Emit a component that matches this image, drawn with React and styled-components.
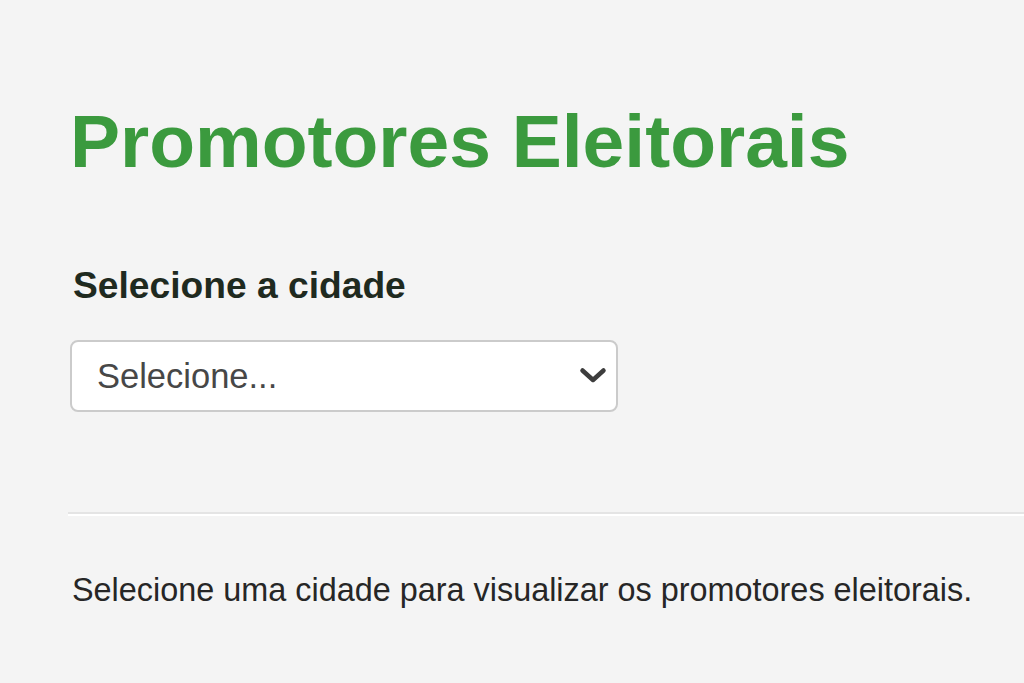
import React from "react";
import styled, { createGlobalStyle } from "styled-components";

const GlobalStyle = createGlobalStyle`
  html, body {
    margin: 0;
    padding: 0;
    background: #f4f4f4;
  }
  body {
    font-family: "Liberation Sans", Arial, sans-serif;
  }
`;

const Page = styled.main`
  min-height: 683px;
  box-sizing: border-box;
  padding: 98px 0 0 70px;
  overflow: hidden;
`;

const Title = styled.h1`
  margin: 0;
  font-size: 75px;
  line-height: 86px;
  font-weight: 700;
  color: #3b9a3e;
  letter-spacing: 0;
`;

const Field = styled.div`
  margin-top: 79px;
  display: flex;
  flex-direction: column;
  gap: 33px;
`;

const Label = styled.label`
  margin: 0 0 0 3px;
  font-size: 37.2px;
  line-height: 44px;
  font-weight: 700;
  color: #1f2a1f;
`;

const SelectBox = styled.div`
  position: relative;
  width: 548px;
  height: 72px;
  box-sizing: border-box;
  border: 2px solid #cbcbcb;
  border-radius: 8px;
  background: #fff;
  display: flex;
  align-items: center;
`;

const Select = styled.select`
  appearance: none;
  -webkit-appearance: none;
  width: 100%;
  height: 100%;
  border: 0;
  background: transparent;
  padding: 0 60px 0 25px;
  font-family: "Liberation Sans", Arial, sans-serif;
  font-size: 34.5px;
  color: #474747;
  outline: none;
`;

const Chevron = styled.svg`
  position: absolute;
  right: 9px;
  top: 50%;
  transform: translateY(-50%);
  pointer-events: none;
`;

const Rule = styled.hr`
  margin: 100px 0 0 -2px;
  height: 0;
  border: 0;
  border-top: 2px solid #e4e4e4;
  border-bottom: 2px solid #ffffff;
`;

const Message = styled.p`
  margin: 56px 0 0 2px;
  font-size: 32.4px;
  line-height: 37px;
  color: #262626;
`;

export default function App() {
  return (
    <>
      <GlobalStyle />
      <Page>
        <Title>Promotores Eleitorais</Title>
        <Field>
          <Label htmlFor="cidade">Selecione a cidade</Label>
          <SelectBox>
            <Select id="cidade" defaultValue="">
              <option value="">Selecione...</option>
            </Select>
            <Chevron width="28" height="20" viewBox="0 0 28 20">
              <polyline
                points="3.5,4.5 14,14 24.5,4.5"
                fill="none"
                stroke="#3d3d3d"
                strokeWidth="4.5"
                strokeLinecap="round"
                strokeLinejoin="round"
              />
            </Chevron>
          </SelectBox>
        </Field>
        <Rule />
        <Message>Selecione uma cidade para visualizar os promotores eleitorais.</Message>
      </Page>
    </>
  );
}
